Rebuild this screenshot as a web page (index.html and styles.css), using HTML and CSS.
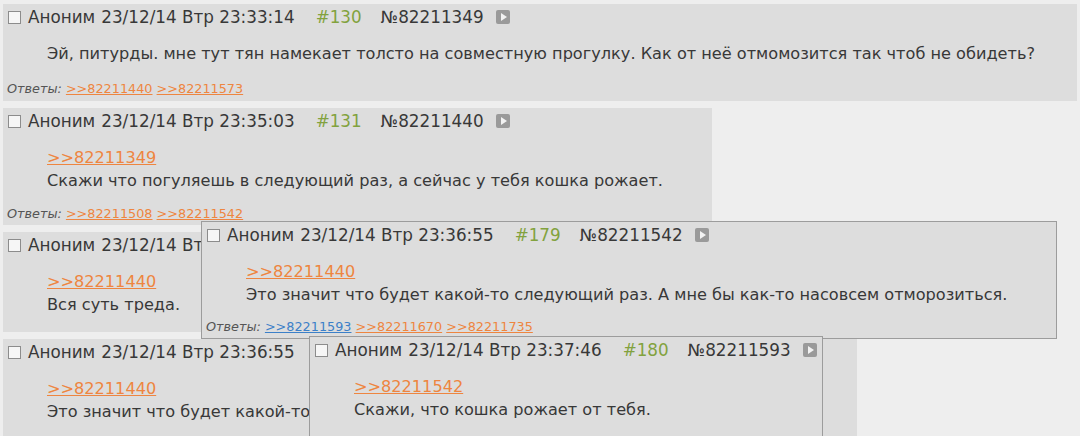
FILE: index.html
```html
<!DOCTYPE html>
<html lang="ru">
<head>
<meta charset="utf-8">
<title>Тред</title>
<link rel="stylesheet" href="styles.css">
</head>
<body>
<div class="thread">
  <div class="post op">
    <div class="head">
      <span class="cb"></span><span class="name">Аноним</span><span class="time">23/12/14 Втр 23:33:14</span><span class="num">#130</span><span class="no">№82211349</span><span class="play"></span>
    </div>
    <div class="body"><p>Эй, питурды. мне тут тян намекает толсто на совместную прогулку. Как от неё отмомозится так чтоб не обидеть?</p></div>
    <div class="refs"><i>Ответы:</i> <a href="#">&gt;&gt;82211440</a> <a href="#">&gt;&gt;82211573</a></div>
  </div>

  <div class="post">
    <div class="head">
      <span class="cb"></span><span class="name">Аноним</span><span class="time">23/12/14 Втр 23:35:03</span><span class="num">#131</span><span class="no">№82211440</span><span class="play"></span>
    </div>
    <div class="body"><a href="#">&gt;&gt;82211349</a><p>Скажи что погуляешь в следующий раз, а сейчас у тебя кошка рожает.</p></div>
    <div class="refs"><i>Ответы:</i> <a href="#">&gt;&gt;82211508</a> <a href="#">&gt;&gt;82211542</a></div>
  </div>

  <div class="post noreply">
    <div class="head">
      <span class="cb"></span><span class="name">Аноним</span><span class="time">23/12/14 Втр 23:35:41</span><span class="num">#152</span><span class="no">№82211508</span><span class="play"></span>
    </div>
    <div class="body"><a href="#">&gt;&gt;82211440</a><p>Вся суть треда.</p></div>
  </div>

  <div class="post">
    <div class="head">
      <span class="cb"></span><span class="name">Аноним</span><span class="time">23/12/14 Втр 23:36:55</span><span class="num">#179</span><span class="no">№82211542</span><span class="play"></span>
    </div>
    <div class="body"><a href="#">&gt;&gt;82211440</a><p>Это значит что будет какой-то следующий раз. А мне бы как-то насовсем отморозиться.</p></div>
    <div class="refs"><i>Ответы:</i> <a href="#">&gt;&gt;82211593</a> <a href="#">&gt;&gt;82211670</a> <a href="#">&gt;&gt;82211735</a></div>
  </div>
</div>

<div class="post popup popup-a">
  <div class="head">
    <span class="cb"></span><span class="name">Аноним</span><span class="time">23/12/14 Втр 23:36:55</span><span class="num">#179</span><span class="no">№82211542</span><span class="play"></span>
  </div>
  <div class="body"><a href="#">&gt;&gt;82211440</a><p>Это значит что будет какой-то следующий раз. А мне бы как-то насовсем отморозиться.</p></div>
  <div class="refs"><i>Ответы:</i> <a href="#" class="visited">&gt;&gt;82211593</a> <a href="#">&gt;&gt;82211670</a> <a href="#">&gt;&gt;82211735</a></div>
</div>

<div class="post popup popup-b">
  <div class="head">
    <span class="cb"></span><span class="name">Аноним</span><span class="time">23/12/14 Втр 23:37:46</span><span class="num">#180</span><span class="no">№82211593</span><span class="play"></span>
  </div>
  <div class="body"><a href="#">&gt;&gt;82211542</a><p>Скажи, что кошка рожает от тебя.</p></div>
</div>
</body>
</html>
```

FILE: styles.css
```css
html, body {
  margin: 0;
  padding: 0;
  overflow: hidden;
}
body {
  background: #eeeeee;
  font-family: "DejaVu Sans", "Liberation Sans", sans-serif;
  color: #383838;
  position: relative;
  width: 1080px;
  height: 436px;
}
.thread {
  padding: 4px 0 0 3px;
  display: flex;
  flex-direction: column;
  align-items: flex-start;
  gap: 7px;
}
.post {
  background: #dddddd;
  padding: 0 5px;
  box-sizing: border-box;
}
.post.noreply {
  padding-bottom: 16px;
}
.head {
  display: flex;
  align-items: center;
  height: 26px;
  font-size: 16.8px;
  white-space: nowrap;
}
.cb {
  width: 13px;
  height: 13px;
  box-sizing: border-box;
  border: 1px solid #8c8c8c;
  background: #f6f6f6;
  margin-right: 7px;
  flex: none;
}
.name { margin-right: 6px; }
.time { margin-right: 21px; }
.num { color: #82a23e; margin-right: 19px; }
.no { margin-right: 12px; }
.play {
  width: 14px;
  height: 14px;
  border-radius: 2px;
  background: #9a9a9a;
  position: relative;
  flex: none;
}
.play::after {
  content: "";
  position: absolute;
  left: 5px;
  top: 3px;
  border-left: 6px solid #f2f2f2;
  border-top: 4px solid transparent;
  border-bottom: 4px solid transparent;
}
.body {
  margin: 12px 44px 0 39px;
  font-size: 16.15px;
  line-height: 23px;
  white-space: nowrap;
}
.op .body { margin-right: 37px; }
.body p { margin: 0; }
a {
  color: #ee8540;
  text-decoration: underline;
}
a.visited { color: #3c80c8; }
.refs {
  margin: 14px 0 0 -1px;
  font-size: 12.8px;
  line-height: 16px;
  padding-bottom: 3px;
  white-space: nowrap;
}
.op .refs {
  margin-top: 16px;
  padding-bottom: 4px;
}
.refs i { color: #555; }
.popup {
  position: absolute;
  border: 1px solid #9c9c9c;
}
.popup-a {
  left: 201px;
  top: 221px;
}
.popup-a .refs {
  margin-top: 13px;
  padding-bottom: 3px;
}
.popup-b {
  left: 309px;
  top: 336px;
  height: 130px;
}
```
